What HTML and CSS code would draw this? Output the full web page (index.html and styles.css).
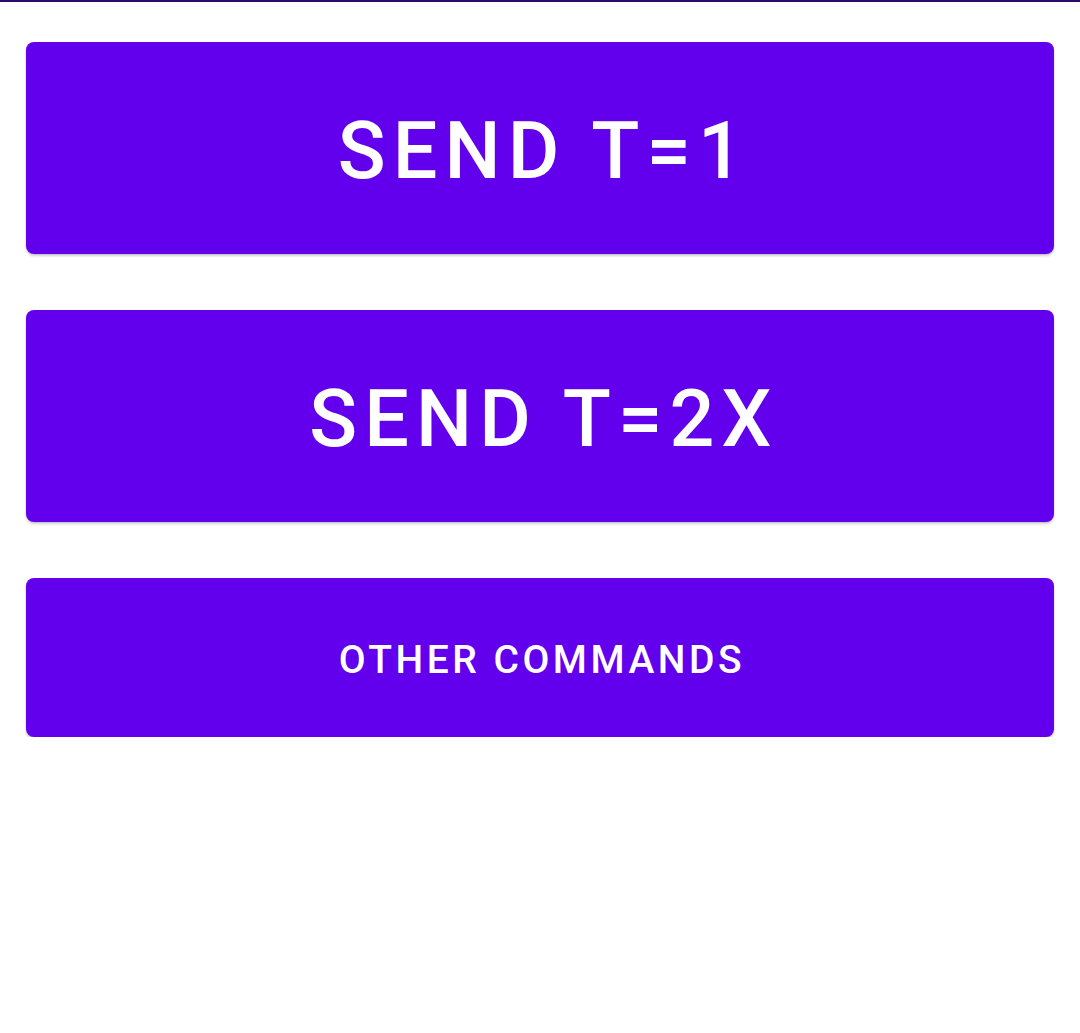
FILE: index.html
```html
<!DOCTYPE html>
<html>
<head>
<meta charset="utf-8">
<link rel="stylesheet" href="styles.css">
</head>
<body>
<div class="statusline"></div>
<main class="stack">
  <button class="btn btn-big">SEND T=1</button>
  <button class="btn btn-big">SEND T=2X</button>
  <button class="btn btn-small">OTHER COMMANDS</button>
</main>
</body>
</html>
```
FILE: styles.css
```css
html, body {
  margin: 0;
  padding: 0;
  background: #ffffff;
  font-family: Roboto, "Noto Sans", sans-serif;
}
.statusline {
  height: 2px;
  background: #2e0b66;
}
.stack {
  display: flex;
  flex-direction: column;
  gap: 56px;
  padding: 40px 26px 0 26px;
}
.btn {
  border: none;
  border-radius: 8px;
  background: #6200ee;
  color: #ffffff;
  font-family: Roboto, "Noto Sans", sans-serif;
  font-weight: 500;
  letter-spacing: 0.09em;
  box-shadow: 0 2px 3px rgba(0,0,0,0.18), 0 1px 1px rgba(0,0,0,0.08);
  width: 100%;
  display: flex;
  align-items: center;
  justify-content: center;
  padding: 0;
}
.btn-big {
  height: 212px;
  font-size: 79px;
  padding: 6px 0 0 0.1em;
}
.btn-small {
  height: 159px;
  font-size: 39px;
  padding: 4px 0 0 0.1em;
}
```
